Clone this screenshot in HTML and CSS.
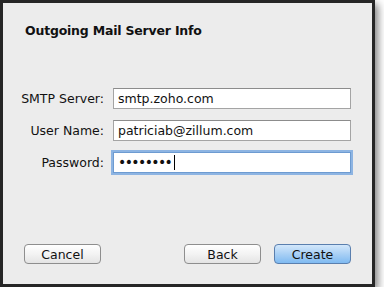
FILE: index.html
```html
<!DOCTYPE html>
<html lang="en">
<head>
    <meta charset="UTF-8">
    <meta name="viewport" content="width=device-width, initial-scale=1.0">
    <title>Outgoing Mail Server Info</title>
    <link rel="stylesheet" href="styles.css">
</head>
<body>
    <div class="window">
        <h1>Outgoing Mail Server Info</h1>

        <form class="server-form">
            <label for="smtp">SMTP Server:</label>
            <div class="field">smtp.zoho.com</div>

            <label for="user">User Name:</label>
            <div class="field">patriciab@zillum.com</div>

            <label for="pass">Password:</label>
            <div class="field focused"><span class="dots">&bull;&bull;&bull;&bull;&bull;&bull;&bull;&bull;</span><span class="caret"></span></div>
        </form>

        <div class="buttons">
            <button type="button">Cancel</button>
            <div class="right">
                <button type="button">Back</button>
                <button type="button" class="default">Create</button>
            </div>
        </div>
    </div>
</body>
</html>
```

FILE: styles.css
```css
body {
    margin: 0;
    background-color: white;
    font-family: "DejaVu Sans", sans-serif;
    font-size: 12.5px;
    color: #111;
}
.window {
    width: 369px;
    height: 281px;
    border: 3px solid #262626;
    background-color: #ececec;
    box-shadow: 3px 4px 8px rgba(0,0,0,0.5);
    display: flex;
    flex-direction: column;
}
h1 {
    margin: 20px 0 0 22px;
    font-size: 12.5px;
    font-weight: bold;
    line-height: 16px;
    letter-spacing: -0.2px;
}
.server-form {
    display: grid;
    grid-template-columns: 101px 238px;
    column-gap: 9px;
    row-gap: 11px;
    margin-top: 49px;
    align-items: center;
}
label {
    text-align: right;
}
.field {
    height: 21px;
    box-sizing: border-box;
    border: 1px solid #a4a4a4;
    border-top-color: #8c8c8c;
    background-color: white;
    padding: 0 4px;
    line-height: 19px;
    white-space: nowrap;
}
.field.focused {
    border-color: #6d9bd1;
    box-shadow: 0 0 0 2px #8db4e2;
}
.dots {
    font-size: 14px;
    letter-spacing: -1.6px;
}
.caret {
    display: inline-block;
    width: 1px;
    height: 15px;
    background-color: black;
    vertical-align: -3px;
    margin-left: 3px;
}
.buttons {
    display: flex;
    justify-content: space-between;
    margin: auto 21px 20px 21px;
}
.right {
    display: flex;
    gap: 13px;
}
button {
    width: 77px;
    height: 20px;
    font-family: inherit;
    font-size: 12.5px;
    color: #111;
    border: 1px solid #8e8e8e;
    border-radius: 4px;
    background: linear-gradient(#ffffff, #f3f3f3 50%, #e4e4e4);
    padding: 0;
}
button.default {
    border-color: #5a7fae;
    background: linear-gradient(#d3e7fb, #a9d0f5 50%, #7fbaf1);
}
```
